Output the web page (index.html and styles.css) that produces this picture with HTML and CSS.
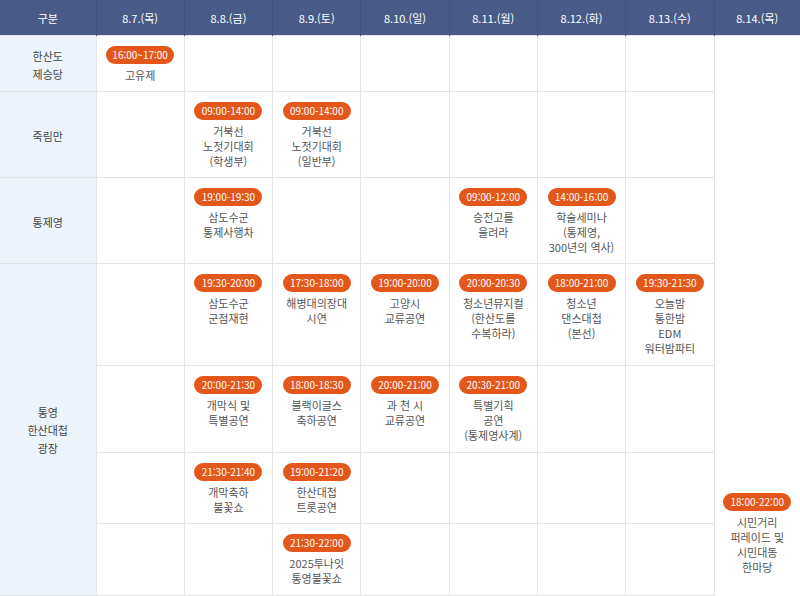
FILE: index.html
```html
<!DOCTYPE html>
<html lang="ko">
<head>
  <meta charset="UTF-8">
  <title>행사 일정표</title>
  <link rel="stylesheet" href="styles.css">
</head>
<body>

  <table class="schedule">
    <colgroup>
      <col class="col-place">
      <col span="7">
      <col class="col-last">
    </colgroup>
    <thead>
      <tr>
        <th>구분</th>
        <th>8.7.(목)</th>
        <th>8.8.(금)</th>
        <th>8.9.(토)</th>
        <th>8.10.(일)</th>
        <th>8.11.(월)</th>
        <th>8.12.(화)</th>
        <th>8.13.(수)</th>
        <th>8.14.(목)</th>
      </tr>
    </thead>
    <tbody>
      <tr>
        <td class="place">한산도<br>제승당</td>
        <td><span class="time">16:00~17:00</span><p class="event">고유제</p></td>
        <td></td>
        <td></td>
        <td></td>
        <td></td>
        <td></td>
        <td></td>
        <td class="last-day" rowspan="7"><span class="time">18:00-22:00</span><p class="event">시민거리<br>퍼레이드 및<br>시민대동<br>한마당</p></td>
      </tr>
      <tr>
        <td class="place">죽림만</td>
        <td></td>
        <td><span class="time">09:00-14:00</span><p class="event">거북선<br>노젓기대회<br>(학생부)</p></td>
        <td><span class="time">09:00-14:00</span><p class="event">거북선<br>노젓기대회<br>(일반부)</p></td>
        <td></td>
        <td></td>
        <td></td>
        <td></td>
      </tr>
      <tr>
        <td class="place">통제영</td>
        <td></td>
        <td><span class="time">19:00-19:30</span><p class="event">삼도수군<br>통제사행차</p></td>
        <td></td>
        <td></td>
        <td><span class="time">09:00-12:00</span><p class="event">승전고를<br>울려라</p></td>
        <td><span class="time">14:00-16:00</span><p class="event">학술세미나<br>(통제영,<br>300년의 역사)</p></td>
        <td></td>
      </tr>
      <tr class="square-row">
        <td class="place" rowspan="4">통영<br>한산대첩<br>광장</td>
        <td></td>
        <td><span class="time">19:30-20:00</span><p class="event">삼도수군<br>군점재현</p></td>
        <td><span class="time">17:30-18:00</span><p class="event">해병대의장대<br>시연</p></td>
        <td><span class="time">19:00-20:00</span><p class="event">고양시<br>교류공연</p></td>
        <td><span class="time">20:00-20:30</span><p class="event">청소년뮤지컬<br>(한산도를<br>수복하라)</p></td>
        <td><span class="time">18:00-21:00</span><p class="event">청소년<br>댄스대첩<br>(본선)</p></td>
        <td><span class="time">19:30-21:30</span><p class="event">오늘밤<br>통한밤<br>EDM<br>워터밤파티</p></td>
      </tr>
      <tr class="square-row">
        <td></td>
        <td><span class="time">20:00-21:30</span><p class="event">개막식 및<br>특별공연</p></td>
        <td><span class="time">18:00-18:30</span><p class="event">블랙이글스<br>축하공연</p></td>
        <td><span class="time">20:00-21:00</span><p class="event">과 천 시<br>교류공연</p></td>
        <td><span class="time">20:30-21:00</span><p class="event">특별기획<br>공연<br>(통제영사계)</p></td>
        <td></td>
        <td></td>
      </tr>
      <tr>
        <td></td>
        <td><span class="time">21:30-21:40</span><p class="event">개막축하<br>불꽃쇼</p></td>
        <td><span class="time">19:00-21:20</span><p class="event">한산대첩<br>트롯공연</p></td>
        <td></td>
        <td></td>
        <td></td>
        <td></td>
      </tr>
      <tr class="square-row">
        <td></td>
        <td></td>
        <td><span class="time">21:30-22:00</span><p class="event">2025투나잇<br>통영불꽃쇼</p></td>
        <td></td>
        <td></td>
        <td></td>
        <td></td>
      </tr>
    </tbody>
  </table>

</body>
</html>
```

FILE: styles.css
```css
body {
  margin: 0;
  background-color: #ffffff;
  font-family: "Noto Sans CJK KR", "Noto Sans", sans-serif;
  color: #444444;
}

.schedule {
  width: 800px;
  table-layout: fixed;
  border-collapse: collapse;
  font-size: 11px;
}

.col-place {
  width: 96px;
}

.col-last {
  width: 86px;
}

.schedule th {
  height: 35px;
  padding: 0;
  background-color: #4a5a88;
  color: #ffffff;
  font-weight: normal;
  border-right: 1px solid #42517e;
}

.schedule th:last-child {
  border-right: none;
}

.schedule td {
  padding: 10px 4px 8px;
  border: 1px solid #e4e4e4;
  text-align: center;
  vertical-align: top;
  line-height: 15px;
}

.square-row td {
  padding-bottom: 9px;
}

.schedule td.place {
  background-color: #eef4fc;
  vertical-align: middle;
  line-height: 18px;
  color: #444444;
  border-left: none;
  border-right-color: #e2e6ee;
}

.schedule td.last-day {
  vertical-align: bottom;
  padding-bottom: 21px;
  border-bottom: none;
  border-right: none;
}

.time {
  display: inline-block;
  width: 68px;
  height: 18px;
  line-height: 18px;
  border-radius: 9px;
  background-color: #e4571b;
  color: #ffffff;
  font-size: 10px;
}

.event {
  margin: 4px 0 0;
  color: #555555;
}
```
